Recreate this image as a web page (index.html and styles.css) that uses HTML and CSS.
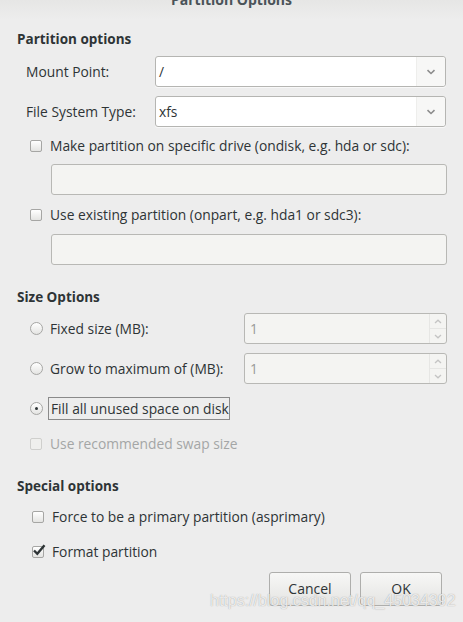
FILE: index.html
```html
<!DOCTYPE html>
<html>
<head>
<meta charset="utf-8">
<link rel="stylesheet" href="styles.css">
</head>
<body>
<div class="dialog">
  <div class="titlebar"><span class="title">Partition Options</span></div>
  <div class="content">
    <div class="heading h1">Partition options</div>

    <div class="form-row r1">
      <div class="label">Mount Point:</div>
      <div class="combo">
        <div class="combo-text">/</div>
        <div class="combo-btn"><svg width="10" height="6" viewBox="0 0 10 6"><path d="M1.5 1.2 L5 4.5 L8.5 1.2" fill="none" stroke="#8c8c8c" stroke-width="1.6"/></svg></div>
      </div>
    </div>
    <div class="form-row r2">
      <div class="label">File System Type:</div>
      <div class="combo">
        <div class="combo-text">xfs</div>
        <div class="combo-btn"><svg width="10" height="6" viewBox="0 0 10 6"><path d="M1.5 1.2 L5 4.5 L8.5 1.2" fill="none" stroke="#8c8c8c" stroke-width="1.6"/></svg></div>
      </div>
    </div>

    <div class="check-row c1"><span class="checkbox"></span><span>Make partition on specific drive (ondisk, e.g. hda or sdc):</span></div>
    <div class="entry e1"></div>
    <div class="check-row c2"><span class="checkbox"></span><span>Use existing partition (onpart, e.g. hda1 or sdc3):</span></div>
    <div class="entry e2"></div>

    <div class="heading h2">Size Options</div>

    <div class="radio-row s1">
      <div class="radio-label"><span class="radio"></span><span>Fixed size (MB):</span></div>
      <div class="spin">
        <div class="spin-text">1</div>
        <div class="spin-btns">
          <div class="spin-b"><svg width="8" height="5" viewBox="0 0 8 5"><path d="M1 4 L4 1.2 L7 4" fill="none" stroke="#c4c4c4" stroke-width="1.3"/></svg></div>
          <div class="spin-b"><svg width="8" height="5" viewBox="0 0 8 5"><path d="M1 1 L4 3.8 L7 1" fill="none" stroke="#c4c4c4" stroke-width="1.3"/></svg></div>
        </div>
      </div>
    </div>
    <div class="radio-row s2">
      <div class="radio-label"><span class="radio"></span><span>Grow to maximum of (MB):</span></div>
      <div class="spin">
        <div class="spin-text">1</div>
        <div class="spin-btns">
          <div class="spin-b"><svg width="8" height="5" viewBox="0 0 8 5"><path d="M1 4 L4 1.2 L7 4" fill="none" stroke="#c4c4c4" stroke-width="1.3"/></svg></div>
          <div class="spin-b"><svg width="8" height="5" viewBox="0 0 8 5"><path d="M1 1 L4 3.8 L7 1" fill="none" stroke="#c4c4c4" stroke-width="1.3"/></svg></div>
        </div>
      </div>
    </div>
    <div class="radio-row s3">
      <div class="radio-label"><span class="radio checked"></span><span class="focus">Fill all unused space on disk</span></div>
    </div>
    <div class="check-row disabled d1"><span class="checkbox"></span><span>Use recommended swap size</span></div>

    <div class="heading h3">Special options</div>

    <div class="check-row sp sp1"><span class="checkbox"></span><span>Force to be a primary partition (asprimary)</span></div>
    <div class="check-row sp sp2"><span class="checkbox checked"><svg width="14" height="12" viewBox="0 0 14 12"><path d="M2 6.5 L5.3 9.8 L12.5 1.2" fill="none" stroke="#2e3436" stroke-width="2.4"/></svg></span><span>Format partition</span></div>

    <div class="buttons">
      <div class="button">Cancel</div>
      <div class="button">OK</div>
    </div>
  </div>
  <div class="watermark">https://blog.csdn.net/qq_45034392</div>
</div>
</body>
</html>
```
FILE: styles.css
```css
html, body {
  margin: 0;
  padding: 0;
}
body {
  background: #ededed;
  font-family: "Open Sans", "DejaVu Sans", sans-serif;
  font-size: 13.8px;
  color: #2e3436;
  width: 463px;
  height: 622px;
  overflow: hidden;
}
.dialog {
  position: relative;
  width: 463px;
  height: 622px;
}
.titlebar {
  height: 20px;
  overflow: hidden;
  background: linear-gradient(#e6e6e5, #ededed);
  text-align: center;
}
.title {
  display: block;
  margin-top: -10px;
  line-height: 20px;
  font-weight: bold;
  font-size: 14px;
  color: #4a5358;
}
.content {
  display: flex;
  flex-direction: column;
}
.heading {
  margin-left: 17px;
  font-weight: bold;
  line-height: 18px;
  height: 18px;
  font-size: 13.5px;
}
.h1 { margin-top: 10px; }
.h2 { margin-top: 23px; }
.h3 { margin-top: 24px; }

.form-row {
  display: flex;
  align-items: center;
  height: 31px;
}
.r1 { margin-top: 8px; }
.r2 { margin-top: 9px; }
.label {
  width: 129px;
  padding-left: 26px;
  flex: none;
}
.combo {
  display: flex;
  width: 291px;
  height: 31px;
  box-sizing: border-box;
  border: 1px solid #b5b5b2;
  border-radius: 3px;
  background: #ffffff;
  box-shadow: 0 1px 0 rgba(255,255,255,0.6);
}
.combo-text {
  flex: 1;
  padding-left: 3px;
  line-height: 29px;
}
.combo-btn {
  width: 28px;
  border-left: 1px solid #eeeeec;
  background: #f7f7f6;
  border-radius: 0 3px 3px 0;
  display: flex;
  align-items: center;
  justify-content: center;
}

.check-row {
  display: flex;
  align-items: center;
  height: 18px;
  line-height: 18px;
  padding-left: 30px;
}
.check-row .checkbox { margin-right: 8px; }
.c1 { margin-top: 10px; }
.c2 { margin-top: 11px; }
.checkbox {
  width: 12px;
  height: 12px;
  box-sizing: border-box;
  border: 1px solid #a6a6a4;
  border-radius: 2px;
  background: linear-gradient(#ffffff, #e4e4e2);
  flex: none;
  position: relative;
}
.checkbox.checked svg {
  position: absolute;
  left: -1px;
  top: -3px;
}
.entry {
  margin-left: 51px;
  width: 396px;
  height: 31px;
  box-sizing: border-box;
  border: 1px solid #b8b8b5;
  border-radius: 3px;
  background: #f4f4f2;
}
.e1 { margin-top: 9px; }
.e2 { margin-top: 10px; }

.radio-row {
  display: flex;
  align-items: center;
  height: 31px;
}
.s1 { margin-top: 7px; }
.s2 { margin-top: 9px; }
.s3 { margin-top: 13px; height: 23px; }
.radio-label {
  width: 244px;
  flex: none;
  display: flex;
  align-items: center;
  padding-left: 30px;
  box-sizing: border-box;
}
.radio {
  width: 13px;
  height: 13px;
  box-sizing: border-box;
  border: 1px solid #a6a6a4;
  border-radius: 50%;
  background: linear-gradient(#ffffff, #e4e4e2);
  flex: none;
  margin-right: 7px;
  position: relative;
}
.radio.checked::after {
  content: "";
  position: absolute;
  left: 4px;
  top: 4px;
  width: 3px;
  height: 3px;
  border-radius: 50%;
  background: #2e3436;
}
.focus {
  border: 1px solid #8a8a8a;
  padding: 1px 0 1px 2px;
  margin-left: -2px;
  line-height: 19px;
}
.spin {
  display: flex;
  width: 203px;
  height: 31px;
  box-sizing: border-box;
  border: 1px solid #b8b8b5;
  border-radius: 3px;
  background: #f4f4f2;
}
.spin-text {
  flex: 1;
  padding-left: 5px;
  line-height: 29px;
  color: #9a9a98;
}
.spin-btns {
  width: 16px;
  border-left: 1px solid #e6e6e4;
  display: flex;
  flex-direction: column;
}
.spin-b {
  flex: 1;
  display: flex;
  align-items: center;
  justify-content: center;
}
.spin-b + .spin-b { border-top: 1px solid #e6e6e4; }

.disabled { color: #a4a6a6; }
.disabled .checkbox { border-color: #cfcfcd; background: #efefed; }
.d1 { margin-top: 15px; }

.sp { padding-left: 32px; }
.sp1 { margin-top: 13px; }
.sp2 { margin-top: 17px; }

.buttons {
  display: flex;
  gap: 9px;
  margin-top: 11px;
  padding-left: 269px;
}
.button {
  width: 82px;
  height: 34px;
  box-sizing: border-box;
  border: 1px solid #aeaeac;
  border-radius: 3px;
  background: linear-gradient(#f7f7f6, #e4e4e2);
  text-align: center;
  line-height: 32px;
  font-size: 14px;
}
.watermark {
  position: absolute;
  left: 210px;
  top: 592px;
  font-family: "Liberation Sans", Arial, sans-serif;
  font-size: 16px;
  color: rgba(255,255,255,0.8);
  text-shadow: 0 0 1px rgba(110,110,110,0.7);
  white-space: nowrap;
}
```
